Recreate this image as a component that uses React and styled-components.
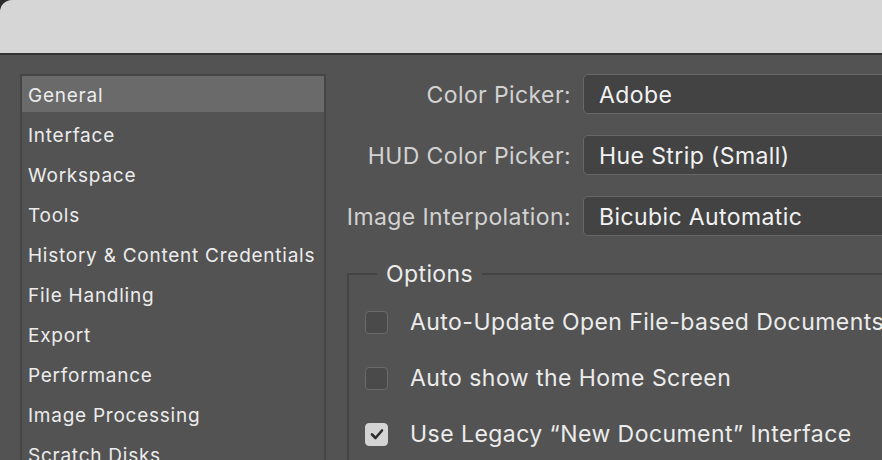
import React from 'react'
import styled, { createGlobalStyle } from 'styled-components'

const GlobalStyle = createGlobalStyle`
  html, body {
    margin: 0;
    padding: 0;
    background: #2b2b2b;
    overflow: hidden;
  }
  body {
    font-family: Inter, "Open Sans", "Liberation Sans", sans-serif;
    -webkit-font-smoothing: antialiased;
  }
`

const sections = [
  'General',
  'Interface',
  'Workspace',
  'Tools',
  'History & Content Credentials',
  'File Handling',
  'Export',
  'Performance',
  'Image Processing',
  'Scratch Disks',
]

const pickers = [
  { label: 'Color Picker:', value: 'Adobe' },
  { label: 'HUD Color Picker:', value: 'Hue Strip (Small)' },
  { label: 'Image Interpolation:', value: 'Bicubic Automatic' },
]

const options = [
  { label: 'Auto-Update Open File-based Documents', checked: false },
  { label: 'Auto show the Home Screen', checked: false },
  { label: 'Use Legacy \u201cNew Document\u201d Interface', checked: true },
]

const App = () => {
  const [selected, setSelected] = React.useState(0)
  const [checks, setChecks] = React.useState(options.map((o) => o.checked))

  const _toggle = (index) => {
    setChecks(checks.map((c, i) => (i === index ? !c : c)))
  }

  return (
    <Window>
      <GlobalStyle />
      <TitleBar />
      <Body>
        <SectionList>
          {
            sections.map((name, index) => (
              <SectionItem key={name} active={selected === index} onClick={() => setSelected(index)}>
                {name}
              </SectionItem>
            ))
          }
        </SectionList>
        <Settings>
          <PickerGrid>
            {
              pickers.map((p) => (
                <React.Fragment key={p.label}>
                  <Label>{p.label}</Label>
                  <Dropdown>{p.value}</Dropdown>
                </React.Fragment>
              ))
            }
          </PickerGrid>
          <Group>
            <Legend>Options</Legend>
            {
              options.map((o, index) => (
                <CheckRow key={o.label} onClick={() => _toggle(index)}>
                  <Box checked={checks[index]}>
                    {checks[index] && (
                      <svg width="14" height="12" viewBox="0 0 14 12">
                        <path d="M2 6.5 L5.5 10 L12 2.5" fill="none" stroke="#2e2e2e" strokeWidth="2.6" strokeLinecap="round" strokeLinejoin="round" />
                      </svg>
                    )}
                  </Box>
                  <CheckLabel>{o.label}</CheckLabel>
                </CheckRow>
              ))
            }
          </Group>
        </Settings>
      </Body>
    </Window>
  )
}

const Window = styled('div')`
  width: 882px;
  height: 460px;
  overflow: hidden;
  border-top-left-radius: 12px;
  background: #535353;
  display: flex;
  flex-direction: column;
`

const TitleBar = styled('div')`
  height: 53px;
  flex-shrink: 0;
  background: #d6d6d6;
  border-bottom: 2px solid #333333;
`

const Body = styled('div')`
  flex: 1;
  display: flex;
  padding: 19px 0 0 20px;
  gap: 21px;
  min-height: 0;
`

const SectionList = styled('div')`
  width: 302px;
  flex-shrink: 0;
  border: 2px solid #454545;
  border-bottom: none;
  background: #535353;
  display: flex;
  flex-direction: column;
  gap: 4px;
  overflow: hidden;
`

const SectionItem = styled('div')`
  flex-shrink: 0;
  height: 36px;
  line-height: 39px;
  padding-left: 6px;
  font-size: 19px;
  letter-spacing: 0.75px;
  color: #ececec;
  white-space: nowrap;
  overflow: hidden;
  background: ${(props) => (props.active ? '#6a6a6a' : 'transparent')};
  cursor: default;
`

const Settings = styled('div')`
  flex: 1;
  min-width: 0;
  display: flex;
  flex-direction: column;
`

const PickerGrid = styled('div')`
  display: grid;
  grid-template-columns: 245px 1fr;
  column-gap: 12px;
  row-gap: 21px;
  margin-left: -21px;
  margin-right: -40px;
`

const Label = styled('div')`
  height: 40px;
  line-height: 42px;
  text-align: right;
  font-size: 23px;
  letter-spacing: 0.4px;
  color: #d2d2d2;
  white-space: nowrap;
`

const Dropdown = styled('div')`
  height: 38px;
  line-height: 40px;
  border: 1px solid #686868;
  border-radius: 5px;
  background: #434343;
  padding-left: 15px;
  font-size: 23px;
  letter-spacing: 0.4px;
  color: #f2f2f2;
  white-space: nowrap;
`

const Group = styled('div')`
  position: relative;
  margin-top: 37px;
  margin-right: -40px;
  flex: 1;
  border-top: 2px solid #444444;
  border-left: 2px solid #444444;
  padding: 35px 0 0 16px;
  display: flex;
  flex-direction: column;
  gap: 32px;
`

const Legend = styled('div')`
  position: absolute;
  top: -15px;
  left: 28px;
  padding: 0 9px;
  background: #535353;
  font-size: 23px;
  letter-spacing: 0.4px;
  line-height: 28px;
  color: #ececec;
`

const CheckRow = styled('div')`
  display: flex;
  align-items: center;
  gap: 22px;
  height: 24px;
  cursor: default;
`

const Box = styled('div')`
  width: 21px;
  height: 21px;
  flex-shrink: 0;
  border-radius: 4px;
  border: 1px solid ${(props) => (props.checked ? '#d4d4d4' : '#6a6a6a')};
  background: ${(props) => (props.checked ? '#d4d4d4' : '#4a4a4a')};
  display: flex;
  align-items: center;
  justify-content: center;
`

const CheckLabel = styled('div')`
  font-size: 23px;
  letter-spacing: 0.45px;
  line-height: 28px;
  color: #ececec;
  white-space: nowrap;
`

export default App
